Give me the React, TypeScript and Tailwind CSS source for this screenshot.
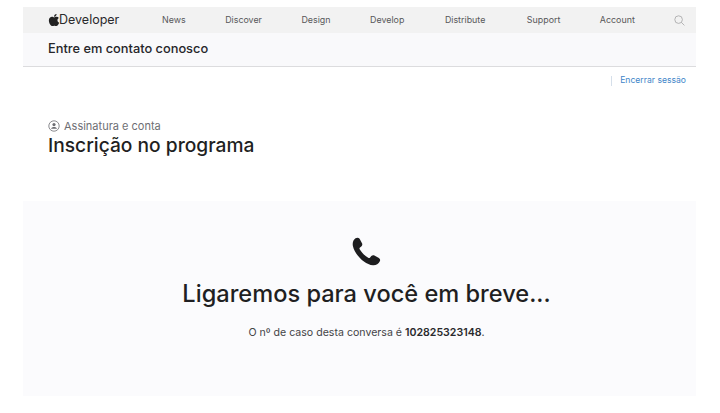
import React from "react";
import { FaApple } from "react-icons/fa";

const items: [string, string][] = [
  ["News", ""],
  ["Discover", ""],
  ["Design", ""],
  ["Develop", ""],
  ["Distribute", "ml-[1px]"],
  ["Support", "ml-[2px]"],
  ["Account", ""],
];

export default function App() {
  return (
    <div className="w-[720px] h-[413px] overflow-hidden bg-white pt-[7px] pl-[23px] pr-[24px] font-['Inter',sans-serif] text-[#1d1d1f]">
      <nav className="h-[26px] bg-[#f2f2f2] flex items-center pl-[25px] pr-[11px]">
        <div className="w-[114px] flex items-center text-[#2a2a2c]">
          <FaApple className="w-[12px] h-[14px] text-[#222] mb-[1px] -mr-[1px]" />
          <span className="text-[12.5px] leading-none">Developer</span>
        </div>
        <div className="flex items-center gap-[39.5px]">
          {items.map(([label, extra]) => (
            <span key={label} className={`${extra} text-[8.9px] text-[#58585a] leading-none`}>
              {label}
            </span>
          ))}
        </div>
        <svg width="11" height="11" viewBox="0 0 11 11" fill="none" stroke="#a3a3a5" strokeWidth="0.8" className="ml-auto">
          <circle cx="4.600" cy="4.600" r="3.800" />
          <path d="M7.400 7.400 10.400 10.400" />
        </svg>
      </nav>
      <div className="h-[34px] bg-[#f9f9fb] border-b border-[#dcdcde] flex items-center pl-[25px]">
        <span className="text-[12.8px] font-medium text-[#26262a] leading-none">Entre em contato conosco</span>
      </div>
      <div className="flex justify-end h-[19px] items-center pr-[10px] mt-[4px]">
        <span className="h-[10px] w-px bg-[#d5dfea] mr-[8px]"></span>
        <span className="text-[8.6px] text-[#3f86c9] leading-none">Encerrar sessão</span>
      </div>
      <div className="pl-[25px] mt-[29px]">
        <div className="flex items-center gap-[4px] h-[14px]">
          <svg width="12" height="12" viewBox="0 0 12 12" fill="none" stroke="#6e6e73" strokeWidth="0.8">
            <circle cx="6" cy="6" r="5.200" />
            <circle cx="6" cy="4.600" r="1.600" fill="#6e6e73" stroke="none" />
            <path d="M3 8.800c.4-1.300 1.600-1.900 3-1.900s2.600.6 3 1.900z" fill="#6e6e73" stroke="none" />
          </svg>
          <span className="text-[11px] text-[#6e6e73] leading-none">Assinatura e conta</span>
        </div>
        <h1 className="text-[19.2px] font-medium leading-[24px] mt-0 text-[#1f1f22]">Inscrição no programa</h1>
      </div>
      <section className="mt-[44px] h-[195px] bg-[#fbfbfd] flex flex-col items-center pt-[36px] pl-[14px]">
        <svg width="29" height="29" viewBox="0 0 29 29" className="text-[#1d1d1f]">
          <path
            fill="currentColor"
            d="M3.500 1.200C5 .3 6.800.6 7.600 1.800L10 6.200C10.600 7.400 10.300 8.600 9.300 9.400L8 10.400C7.400 10.900 7.300 11.600 7.700 12.300 9.600 15.500 12.600 18.700 16.200 20.800 16.900 21.200 17.600 21.100 18.100 20.500L19.300 19.100C20.100 18.200 21.300 18 22.400 18.500L26.900 21C28.200 21.800 28.500 23.300 27.700 24.500 26.600 26.800 24 28.500 21 28.300 12 27.500 2.500 17 .9 9 .3 6 1 3 3.500 1.200Z"
          />
        </svg>
        <h2 className="text-[23.6px] font-medium leading-[30px] mt-[13px] text-[#1f1f22]">Ligaremos para você em breve...</h2>
        <p className="text-[10.6px] leading-[14px] mt-[17px] text-[#444447]">
          O nº de caso desta conversa é <strong className="font-semibold text-[#2a2a2d]">102825323148</strong>.
        </p>
      </section>
    </div>
  );
}
